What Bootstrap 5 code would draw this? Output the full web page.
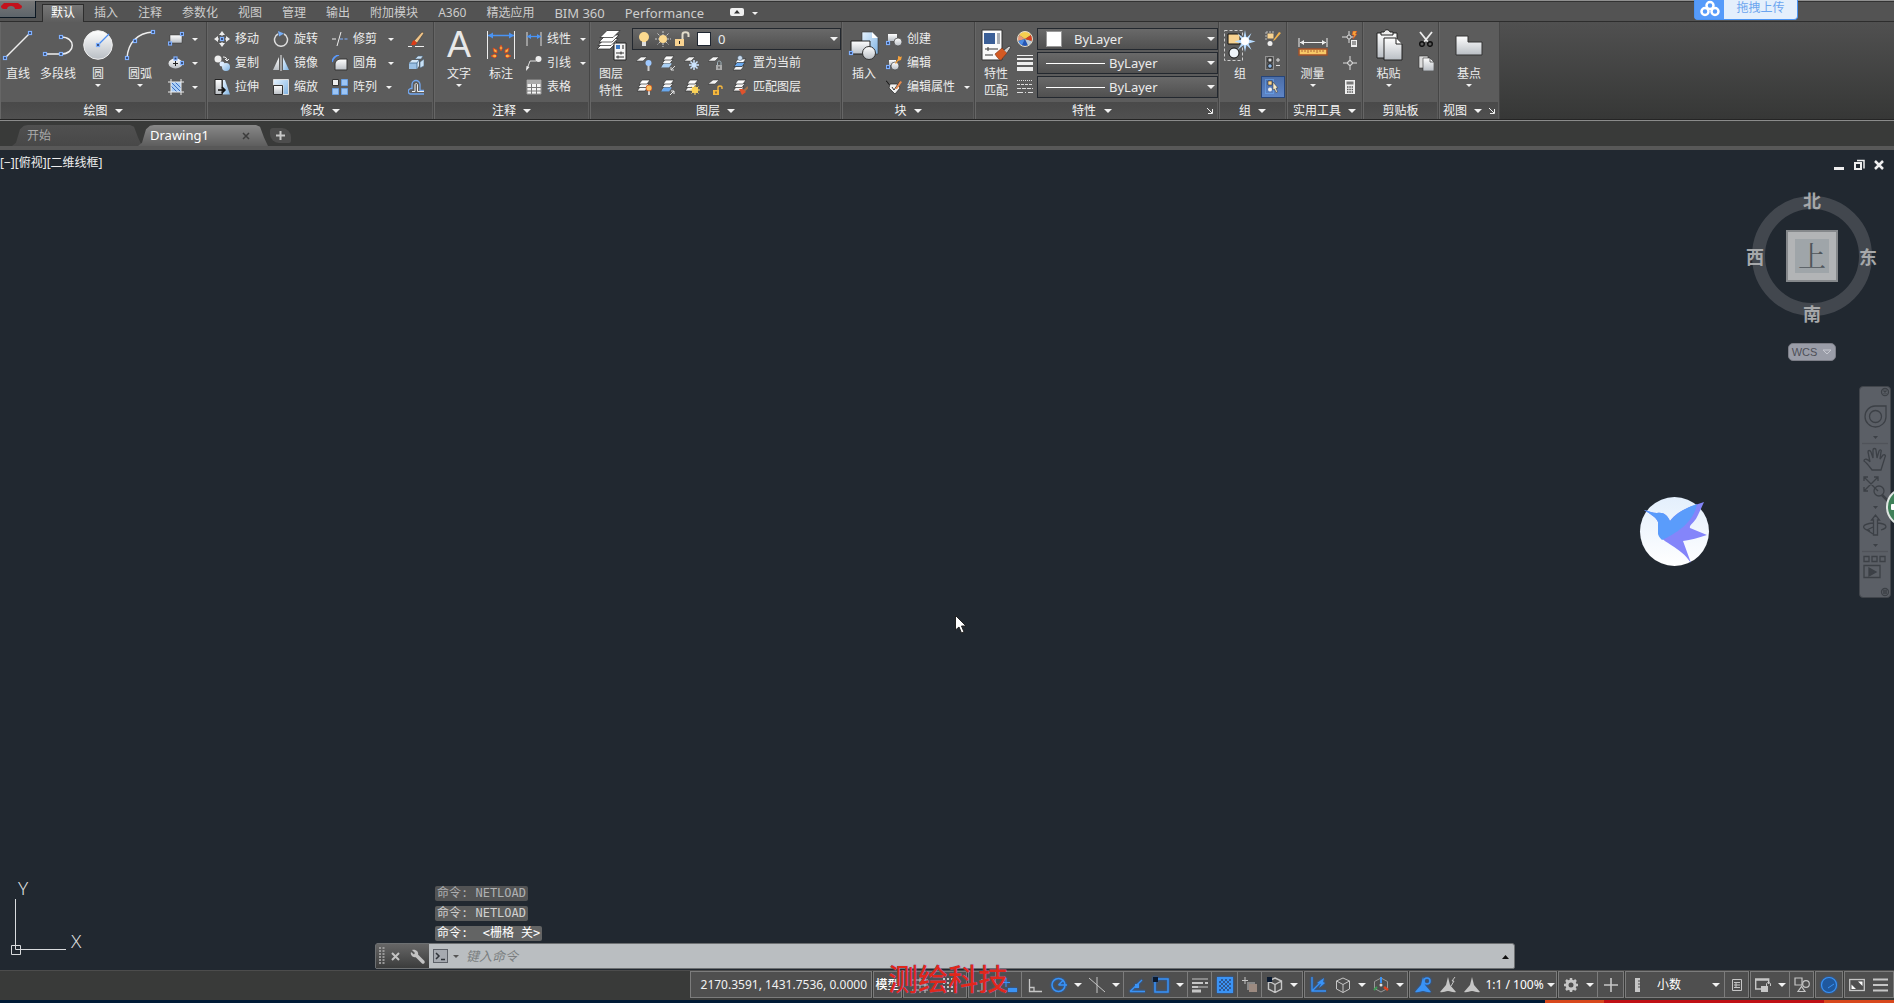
<!DOCTYPE html>
<html lang="zh-CN">
<head>
<meta charset="utf-8">
<meta name="viewport" content="width=device-width, initial-scale=1">
<title>Drawing1</title>
<link href="https://cdn.jsdelivr.net/npm/bootstrap@5.3.0/dist/css/bootstrap.min.css" rel="stylesheet">
<style>
body{font:12px/16px "Noto Sans","Noto Sans CJK SC",sans-serif;color:#ececec;background:#393a39;overflow:hidden}
button,select,input{font:inherit;color:inherit;background:none;border:0;padding:0;margin:0;border-radius:0}
select{appearance:none;outline:0}
select option{background:#555}
svg{display:block;flex:none;overflow:visible}
.ic{width:16px;height:16px}
.ic-lg{width:32px;height:32px}
.tri{flex:none;width:0;height:0;border:3px solid transparent;border-top-color:#f2f2f2;border-bottom:0}
.tri-lg{border-width:4px;border-bottom-width:0}
/* menu */
.menu-row{height:22px;background:#535353;border-top:1px solid #909090;border-bottom:1px solid #2d2d2d;box-shadow:inset 0 1px #333}
.app-btn{width:36px;height:17px;background:linear-gradient(#777,#5d646a);border:1px solid #0b1722;border-width:0 1px 1px 0;margin-right:6px}
.menu-tab{height:18px;padding:0 10px;color:#cdcdcd;text-decoration:none;line-height:18px;font-size:12px;margin-top:3px}
.menu-tab.on{background:linear-gradient(#777,#5d5d5d);color:#fff;border:1px solid #2d2d2d;border-bottom:0;padding:0 8px;height:18px;line-height:16px}
.latin{font-size:13px}
.upload{top:-1px;right:96px;height:20px;width:104px;background:#e4effc;border:1px solid #4a94f4;border-top:0;border-radius:0 0 4px 4px;color:#6ba5ef;z-index:5;line-height:14px}
.upload-logo{width:29px;height:19px;background:#569bfa}
/* ribbon */
.ribbon{height:97px;background:linear-gradient(#505050,#363736)}
.pane{background:#5c5c5c;border-right:1px solid #464646;box-shadow:inset 1px 0 #666}
.pane-body{height:80px;padding-top:5px}
.pane-title{height:17px;gap:7px;line-height:16px;color:#f4f4f4;background:linear-gradient(#494949,#505050);margin:0 1px}
.pane-title .launch{width:6px;height:6px}
.w-draw{width:207px}.w-mod{width:227px}.w-ann{width:156px}.w-lay{width:252px}.w-blk{width:133px}
.w-prop{width:244px}.w-grp{width:68px}.w-util{width:76px}.w-clip{width:76px}.w-view{width:61px}
.mod-cols{gap:14px;padding-left:7px}
.big{display:flex;flex-direction:column;align-items:center;width:44px;padding-top:2px;line-height:17px;height:74px}
.big svg{margin-bottom:4px}
.big .tri{margin-top:2px}
.big.s36{width:36px}.big.s42{width:42px}.big.s48{width:48px}.big.s52{width:51px}.big.s60{width:62px}
.tool{display:flex;align-items:center;gap:5px;height:24px;white-space:nowrap}
.tool .tri{margin-left:6px}
.tool.iconic{width:24px;justify-content:center}
.tool.pressed{height:22px;margin:1px 0;background:linear-gradient(#4a6ca6,#5f86c8);box-shadow:inset 0 0 0 1px #26457a}
.combo{display:flex;align-items:center;height:22px;margin:1px 0;background:linear-gradient(#696969,#505050);border:1px solid #23282f;padding-right:2px;font-size:13px}
.combo select{flex:1 1 0;min-width:0;height:20px;line-height:18px}
.combo.layer{gap:3px;padding-left:3px}
.swatch{width:14px;height:14px;background:#fff;border:1px solid #1d2530}
.swatch.plain{width:16px;height:16px;border-color:#999}
.dash{width:59px;height:1px;background:#fff}
/* file tabs */
.file-row{height:31px;border-top:1px solid #242424;border-bottom:4px solid #585858;box-shadow:inset 0 1px #8b8b8b;background:#393a39;padding:5px 0 0 12px}
.file-tab{height:21px;width:130px;padding:0 15px;color:#a9a9a9;background:linear-gradient(#505050,#484848);clip-path:polygon(0 100%,4px 85%,8px 20%,12px 4%,16px 0,calc(100% - 12px) 0,calc(100% - 8px) 8%,calc(100% - 4px) 60%,100% 100%);margin-right:-4px;line-height:21px}
.file-tab.on{background:linear-gradient(#888,#5e5e5e);color:#fff;font-size:13px;padding-right:18px;padding-left:12px}
.plus{width:21px;height:15px;background:#4d4d4d;border-radius:3px 9px 2px 9px;margin:3px 0 0 6px}
/* canvas */
.canvas{background:#212830}
.vp-label{top:5px;left:0;color:#eee}
.vp-btns{top:9px;right:9px;gap:8px}
.cube{top:36px;right:28px;width:128px;height:142px}
.wind{position:absolute;font:bold 18px/20px "Noto Sans CJK SC",sans-serif;color:#a6a8aa;width:20px;text-align:center}
.cube-face{left:48px;top:44px;width:52px;height:52px;background:#b2b4b6;border:2px solid #85888b;padding:7px}
.cube-face span{display:block;width:34px;height:34px;background:#9fa5a9;color:#50565b;font:28px/32px "Noto Serif CJK SC","Noto Sans CJK SC",serif;text-align:center}
.wcs{top:193px;right:58px;width:48px;height:18px;border:1px solid #7c7e87;border-radius:5px;background:#9a9da8;color:#4e5058;gap:5px;font:11px/14px "Liberation Sans",sans-serif}
.navbar-3d{top:236px;right:3px;width:32px;height:212px;background:#5b5f66;border:1px solid #41454b;border-radius:4px;color:#3c4046}
.bird{right:185px;top:347px;width:69px;height:69px}
.badge-go{right:0;top:338px}
.pointer{left:50.4%;top:465px}
.ucs{left:0;bottom:9px}
.log{left:435px;bottom:29px}
.chip{background:#525354;border-radius:2px;height:15px;line-height:15px;padding:0 2px;margin-bottom:5px;color:#aeb0b2;font-family:"DejaVu Sans Mono","Noto Sans CJK SC",monospace;white-space:pre}
.chip.mid{background:#5a5b5b;color:#cfcfcf}.chip.new{background:#636464;color:#fff;margin-bottom:0}
.cli{left:375px;right:379px;bottom:1px;height:26px;background:#babec1;border:1px solid #6d7072;border-radius:3px 3px 2px 2px}
.cli-grip{width:53px;height:24px;background:linear-gradient(#666,#3b3c3c);gap:6px;padding-left:3px}
.cli .tri{border-top-color:#555}
.cli input{flex:1;height:24px;color:#555;font:italic 13px "Noto Sans CJK SC",sans-serif;padding:0 0 2px 7px;outline:0}
.cli input::placeholder{color:#7b7e80;opacity:1}
/* status */
.status{height:30px;background:#393a39;border-top:1px solid #4c4c4c}
.sgrp{display:flex;height:27px;border:1px solid #7c7c7c;background:#4f4f4f;margin-right:1px}
.cell{display:flex;align-items:center;justify-content:center;gap:7px;height:25px;width:26px;color:#c6c6c6;white-space:nowrap}
.cell+.cell.bar{border-left:1px solid #7c7c7c}
.cell .tri{border-width:4px;border-bottom-width:0}
.blue{color:#3a93f5;filter:drop-shadow(0 0 1px #1263d4)}
.c38{width:38px}.c31{width:31px}.c24{width:24px}.c41{width:41px}.c70{width:72px;gap:3px}.c98{width:98px}
.coords{width:180px;justify-content:flex-end;padding-right:4px;color:#f2f2f2}
.model{width:27px;font-weight:500;color:#fff;overflow:hidden}
.mark-text{right:886px;bottom:8px;color:#e0281c;font:500 30px/36px "Noto Sans CJK SC",sans-serif;z-index:4;text-shadow:0 0 1px #5b86e0}
.edge-strip{height:3px;background:linear-gradient(90deg,#001a35 calc(100% - 349px),#d8481c 0,#d8481c calc(100% - 290px),#c01016 0,#c01016 calc(100% - 70px),#d8481c 0)}
</style>
<script src="https://cdn.jsdelivr.net/npm/bootstrap@5.3.0/dist/js/bootstrap.bundle.min.js"></script>
</head>
<body class="d-flex flex-column vh-100 position-relative">
<svg width="0" height="0" class="position-absolute" aria-hidden="true">
<defs>
<linearGradient id="gw" x2="0" y2="1"><stop stop-color="#fff"/><stop offset="1" stop-color="#b9bec4"/></linearGradient>
<linearGradient id="gb" x2="1" y2="1"><stop stop-color="#e6f3ff"/><stop offset="1" stop-color="#7eb2e2"/></linearGradient>
<linearGradient id="gbird" x2="0" y2="1"><stop stop-color="#e3effc"/><stop offset="1" stop-color="#fff"/></linearGradient>
<g id="nd"><rect x="-1.5" y="-1.5" width="3" height="3" fill="#2d3f66" stroke="#7fb0ff" stroke-width="1.2"/></g>
<g id="sheet"><path d="M5 0h6l-4 4H0z" fill="#f4f4f4" stroke="#333" stroke-width=".5"/></g>
<g id="stack"><path d="M4 8h8l-3 4H1z" fill="#f4f4f4" stroke="#333" stroke-width=".7"/><path d="M5 4.500h8l-3 4H2z" fill="#f4f4f4" stroke="#333" stroke-width=".7"/><path d="M6 1h8l-3 4H3z" fill="#fff" stroke="#333" stroke-width=".7"/></g>
</defs>
<symbol id="line" viewBox="0 0 32 32"><path d="M28 4 3 29" stroke="#eee" stroke-width="1.5"/><use href="#nd" x="28" y="4"/><use href="#nd" x="3" y="29"/></symbol>
<symbol id="pline" viewBox="0 0 32 32"><path d="M19 8c15 0 15 17 0 17H3" fill="none" stroke="#eee" stroke-width="1.5"/><use href="#nd" x="19" y="8"/><use href="#nd" x="3" y="25"/><use href="#nd" x="19" y="25"/></symbol>
<symbol id="circ" viewBox="0 0 32 32"><circle cx="16" cy="16" r="14.300" fill="url(#gw)" stroke="#eee"/><path d="m16 16 11-11" stroke="#4a8cf0" stroke-width="1.200"/><use href="#nd" x="16" y="16"/></symbol>
<symbol id="arc" viewBox="0 0 32 32"><path d="M3 29C4 14 13 4 29 3" fill="none" stroke="#eee" stroke-width="1.500"/><use href="#nd" x="29" y="3"/><use href="#nd" x="11" y="12"/><use href="#nd" x="3" y="29"/></symbol>
<symbol id="rect" viewBox="0 0 16 16"><path d="M2 4h12v8H2z" fill="url(#gw)" stroke="#333" stroke-width=".5"/><use href="#nd" x="14" y="3"/><use href="#nd" x="2" y="12.500"/></symbol>
<symbol id="ell" viewBox="0 0 16 16"><ellipse cx="7.500" cy="8.500" rx="7" ry="5" fill="url(#gw)"/><path d="M5 8.500h5M7.500 6v5" stroke="#222"/><use href="#nd" x="7.500" y="3.500"/><use href="#nd" x="14" y="8"/></symbol>
<symbol id="hatch" viewBox="0 0 16 16"><path d="M3 3h10v10H3z" fill="#a9cdf5"/><path d="m3 7 6 6M3 3l10 10M7 3l6 6" stroke="#3b6fc4"/><path d="M3 0v16M13 0v16M0 3h16M0 13h16" stroke="#eee"/></symbol>
<symbol id="move" viewBox="0 0 16 16"><path d="m8 0 3 4H5zM8 16l3-4H5zM0 8l4-3v6zM16 8l-4-3v6z" fill="#eee"/><path d="M8 3v2m0 6v2M3 8h2m6 0h2" stroke="#eee"/><use href="#nd" x="8" y="8"/></symbol>
<symbol id="rot" viewBox="0 0 16 16"><path d="M11 3a6.500 6.500 0 1 1-6 0" fill="none" stroke="#ddd" stroke-width="1.500"/><path d="m5 0 6 2.500-5 3z" fill="#76aef8"/></symbol>
<symbol id="trim" viewBox="0 0 16 16"><path d="M0 8h4M9 1 5 15" stroke="#eee"/><path d="M8 8h8" stroke="#7fb0ff" stroke-dasharray="3 1.500"/></symbol>
<symbol id="erase" viewBox="0 0 16 16"><path d="M0 15.500h4m3 0h9" stroke="#eee"/><path d="m6 10 8-9 2 1-7 10z" fill="#f1c488" stroke="#333" stroke-width=".5"/><path d="m6 9 3 3c-2 3-4 2-6 2 1-2 1-4 3-5z" fill="#dd3c17"/></symbol>
<symbol id="copy" viewBox="0 0 16 16"><circle cx="4" cy="4" r="3.500" fill="#eee"/><circle cx="8" cy="9" r="2.500" fill="#dcecff"/><circle cx="12" cy="12" r="4" fill="url(#gb)"/><path d="M9 2c3 0 4 1 4 4m-2-2 2 2 2-2" stroke="#eee" fill="none"/></symbol>
<symbol id="mirror" viewBox="0 0 16 16"><path d="M6 2v13H0z" fill="url(#gw)"/><path d="M10 2v13h6z" fill="url(#gb)"/><path d="M8 0v16" stroke="#eee"/></symbol>
<symbol id="fillet" viewBox="0 0 16 16"><path d="M3 15V9c0-3 3-5 6-5h6v11z" fill="url(#gw)" stroke="#333"/><path d="M0 7c1-4 3-6 7-7" stroke="#5b9bff" stroke-width="1.800" fill="none"/></symbol>
<symbol id="explode" viewBox="0 0 16 16"><path d="M1 8h8v6H1z" fill="#9bc1e5"/><path d="m1 8 3-3h7L9 8zM9 8l2-3v6l-2 3z" fill="#d5e8f8"/><path d="M1 8h8v6M9 8l2-3" stroke="#416a91" fill="none" stroke-width=".8"/><path d="m7 4 3-3h5l-2 3zM12 7l4-3v7l-4 2z" fill="#c9e1f6" stroke="#47617a" stroke-width=".6"/></symbol>
<symbol id="stretch" viewBox="0 0 16 16"><path d="M1 .5h7v15H1z" fill="url(#gw)" stroke="#222"/><path d="M9 1h2l5 14.500H9z" fill="url(#gb)"/><path d="M4 11h6M8 8l3 3-3 3" stroke="#111" stroke-width="1.500" fill="none"/></symbol>
<symbol id="scale" viewBox="0 0 16 16"><path d="M.5.5h15v15H10V6H.500z" fill="url(#gb)" stroke="#ddd"/><path d="M.5 6.500h9v9h-9z" fill="url(#gw)" stroke="#333"/></symbol>
<symbol id="array" viewBox="0 0 16 16"><path d="M.5.5h6v6h-6z" fill="#eee" stroke="#333"/><path d="M9.500.5h6v6h-6zM.5 9.500h6v6h-6zM9.500 9.500h6v6h-6z" fill="#9bc4f5" stroke="#6a9fe0"/></symbol>
<symbol id="offset" viewBox="0 0 16 16"><path d="M16 11.500h-4V5.500a4 4 0 0 0-8 0v4H2.500c-3 1-3 5 0 5.500H16" stroke="#72a7f0" fill="none" stroke-width="1.300"/><path d="M4 12.500h3V6c0-2 2.500-2 2.500 0v6.500H16" stroke="#eee" fill="none"/></symbol>
<symbol id="dim" viewBox="0 0 32 32"><path d="M2.500 2v28M29.500 2v28" stroke="#eee"/><path d="M3 6.500h26" stroke="#4a94f5" stroke-width="1.500"/><path d="m3 6.500 5-3v6zM29 6.500l-5-3v6z" fill="#4a94f5"/><g fill="#f8b548" stroke="#d9401b" stroke-width=".8"><path d="m6 27 4-2 2 2-2 2z"/><path d="m8 19 4 2v3l-3-1zM16 16l1.500 3L16 22l-1.500-3zM24 19l-4 2v3l3-1zM26 27l-4-2-2 2 2 2z"/></g></symbol>
<symbol id="lin" viewBox="0 0 16 16"><path d="M1 1v14M15 1v14" stroke="#ddd"/><path d="M1 5.500h14" stroke="#4a94f5" stroke-width="1.300"/><path d="m1 5.500 4-2.500v5zM15 5.500 11 3v5z" fill="#4a94f5"/></symbol>
<symbol id="leader" viewBox="0 0 16 16"><path d="M1 14 4 6h6" fill="none" stroke="#ddd"/><path d="m0 16 .5-5 3 1z" fill="#eee"/><circle cx="12.500" cy="4" r="3" fill="#eee"/></symbol>
<symbol id="table" viewBox="0 0 16 16"><path d="M1 1h14v14H1z" fill="#f4f4f4" stroke="#999"/><path d="M1 1h14v4H1z" fill="#aaa"/><path d="M1 8.500h14M1 12h14M5.500 5v10M10.500 5v10" stroke="#777"/></symbol>
<symbol id="layers" viewBox="0 0 32 32"><g fill="#fff" stroke="#222" stroke-width=".7"><path d="M9 13h13l-7 7H2z"/><path d="M10 9.500h13l-7 7H3z"/><path d="M11 6h13l-7 7H4z"/><path d="M12 1.500h13l-7 7H5z"/></g><path d="M19 14h12v17H19z" fill="#f5f5f5" stroke="#222"/><path d="M21 16h4v4h-4z" fill="#3e7ac4"/><path d="M27 16h2v4h-2z" fill="#888"/><path d="M21 24h8M21 28h8M26 22.500v3M23 26.500v3" stroke="#333"/></symbol>
<symbol id="bulb" viewBox="0 0 16 16"><circle cx="8" cy="6" r="5" fill="#fbd98f"/><path d="M6 10h4v5H6z" fill="#ddd"/><path d="M6 8h4v3H6z" fill="#fbd98f"/></symbol>
<symbol id="sun" viewBox="0 0 16 16"><path d="M8 0v16M0 8h16M2.500 2.500l11 11M13.500 2.500l-11 11" stroke="#ccc" stroke-dasharray="2 1"/><circle cx="8" cy="8" r="4" fill="#fbd98f"/></symbol>
<symbol id="unlock" viewBox="0 0 16 16"><path d="M1 8h9v7H1z" fill="#f8d391"/><path d="M8.500 8V3.500c0-3 6-3 6 0V6" stroke="#e2dccb" stroke-width="2" fill="none"/><path d="M5.500 10v3" stroke="#222"/></symbol>
<symbol id="l1" viewBox="0 0 16 16"><use href="#sheet" x="0" y="2"/><path d="M12.500 8v8" stroke="#ccc" stroke-width="2"/><circle cx="12.500" cy="8" r="3" fill="#9fc9ff"/></symbol>
<symbol id="l2" viewBox="0 0 16 16"><use href="#stack"/><path d="M4 8.500h8l-3 4H1z" fill="#a9d0f5"/><path d="m15 11-4 4m0-3v3h3" stroke="#ddd" fill="none"/></symbol>
<symbol id="l3" viewBox="0 0 16 16"><use href="#sheet" x="0" y="2"/><path d="M10 5v10M5 10h10M6.500 6.500l7 7M13.500 6.500l-7 7" stroke="#cde5ff" stroke-width="1.500"/></symbol>
<symbol id="l4" viewBox="0 0 16 16"><use href="#sheet" x="0" y="2"/><path d="M8 10h6v5H8z" fill="#aaa"/><path d="M9.500 10V7.500c0-2 3.500-2 3.500 0V10" fill="none" stroke="#a3b5bd"/><path d="M11 11.500v2" stroke="#333"/></symbol>
<symbol id="l5" viewBox="0 0 16 16"><use href="#stack" y="3"/><path d="M5 7.500h8l-3 4H2z" fill="#69a8ee" stroke="#333" stroke-width=".6"/><circle cx="8" cy="3" r="2.500" fill="#c9dcf0" stroke="#345" stroke-width=".5"/></symbol>
<symbol id="l6" viewBox="0 0 16 16"><use href="#stack"/><path d="M13 9v7" stroke="#ccc" stroke-width="2"/><circle cx="13" cy="9" r="3" fill="#f8c161" stroke="#df5016" stroke-width=".7"/></symbol>
<symbol id="l7" viewBox="0 0 16 16"><use href="#stack"/><path d="M4 8.500h8l-3 4H1z" fill="#69a8ee"/><path d="m10 16 4-4m-3 0h3v3" stroke="#eee" fill="none"/></symbol>
<symbol id="l8" viewBox="0 0 16 16"><use href="#stack"/><path d="M11 6v10M6 11h10M7.500 7.500l7 7M14.500 7.500l-7 7" stroke="#f7d56b"/><circle cx="11" cy="11" r="3.300" fill="#fbd255"/></symbol>
<symbol id="l9" viewBox="0 0 16 16"><use href="#sheet" x="0" y="1"/><path d="M5 11h6v5H5z" fill="#f6b73d"/><path d="M10 11V8.500c0-2 4-2 4 0v1.500" stroke="#f6b73d" fill="none" stroke-width="1.400"/><path d="M8 12.500v2" stroke="#333"/></symbol>
<symbol id="l10" viewBox="0 0 16 16"><use href="#stack"/><path d="m16 8-4 4" stroke="#a5744a" stroke-width="2"/><path d="m7 10 4 0 3 3-4 3z" fill="#e0522c"/></symbol>
<symbol id="insert" viewBox="0 0 32 32"><path d="M14 3h10l6 6v16H14z" fill="url(#gb)" stroke="#333" stroke-width=".6"/><path d="M24 3v6h6z" fill="#fff"/><path d="M3 12h19v13H3z" fill="url(#gw)" stroke="#222"/><circle cx="21" cy="24" r="6.500" fill="url(#gw)" stroke="#333"/><use href="#nd" x="3" y="24"/></symbol>
<symbol id="create" viewBox="0 0 16 16"><path d="M2 3h9v7H2z" fill="url(#gw)"/><circle cx="12" cy="11" r="4" fill="url(#gw)" stroke="#444" stroke-width=".7"/><use href="#nd" x="2" y="12"/></symbol>
<symbol id="bedit" viewBox="0 0 16 16"><path d="M3 5h7v5H3z" fill="url(#gw)"/><circle cx="9" cy="11" r="4" fill="url(#gw)" stroke="#444" stroke-width=".7"/><path d="m9 8 3-4V1l3 1 1-1-1 4-3 1-2 3z" fill="#f5a13b"/><use href="#nd" x="2" y="12"/></symbol>
<symbol id="attr" viewBox="0 0 16 16"><path d="M0 2c2 0 2 4 4 4" stroke="#111" fill="none"/><path d="M4 5h7l3 4-5 6-6-6z" fill="#f1f1f1" stroke="#222" stroke-width=".7"/><path d="m6 8 2 3 6-9" fill="none" stroke="#333"/><path d="m9 10 5-8 2 1-5 7z" fill="#e98a4e"/></symbol>
<symbol id="match" viewBox="0 0 32 32"><path d="M2 1h20v30H2z" fill="#fafafa" stroke="#333"/><path d="M4 4h11v11H4z" fill="#3b5f97"/><path d="M17 4h3v11h-3z" fill="#a9adb3"/><path d="M5 20h13M5 26h8M8 18v4" stroke="#333"/><path d="m15 25 7-6 5 5-6 7c-2 0-5-4-6-6z" fill="#d35a23" stroke="#7c2d0c" stroke-width=".6"/><path d="m24 21 5-4 2 1-4 6" fill="#ccc" stroke="#444"/></symbol>
<symbol id="wheel" viewBox="0 0 16 16"><path d="M8 8 2 4a7 7 0 0 1 12 0z" fill="#f6ce4e"/><path d="M8 8 2 4a7 7 0 0 0-1 6z" fill="#e79a78"/><path d="m8 8-7 2a7 7 0 0 0 4 4.500z" fill="#4c8ce5"/><path d="m8 8-3 6.500a7 7 0 0 0 6 0z" fill="#2256b8"/><path d="m8 8 3 6.500a7 7 0 0 0 4-4.500z" fill="#b8c9d8"/><path d="m8 8 7 2a7 7 0 0 0-1-6z" fill="#d5411e"/><circle cx="8" cy="8" r="7.500" fill="none" stroke="#e8dfcb"/></symbol>
<symbol id="lw" viewBox="0 0 16 16"><path d="M0 .500h16" stroke="#eee"/><path d="M0 4h16" stroke="#eee" stroke-width="2"/><path d="M0 8.500h16" stroke="#eee" stroke-width="3"/><path d="M0 14h16" stroke="#eee" stroke-width="4"/></symbol>
<symbol id="lt" viewBox="0 0 16 16"><path d="M0 1.500h16" stroke="#ddd" stroke-dasharray="1 1"/><path d="M0 5.500h16" stroke="#ddd" stroke-dasharray="3 1"/><path d="M0 9.500h16" stroke="#ddd" stroke-dasharray="4 1"/><path d="M0 13.500h16" stroke="#ddd" stroke-dasharray="6 2 1 2"/></symbol>
<symbol id="group" viewBox="0 0 32 32"><path d="M.5 1.500h18v30H.5z" stroke="#ccc" stroke-dasharray="3 2" fill="none"/><path d="M4 5h12v10H4z" fill="#f8d391" stroke="#111"/><circle cx="10" cy="24" r="5" fill="#eef3f8" stroke="#111"/><path d="m21 1 1.500 8 5-5-3 6.500 7 2-7 2 3 6.500-5-5L21 23l-1.500-7-6 5 4-6.500-7-2 7-2-4-6.500 6 5z" fill="#b8dcff"/><circle cx="21" cy="12" r="4" fill="#fff"/></symbol>
<symbol id="g2" viewBox="0 0 16 16"><path d="M1 1h9M1 1v9" stroke="#bbb" stroke-dasharray="2 1"/><path d="M2.500 2.500h6v5h-6z" fill="#f8d391"/><circle cx="5" cy="12.500" r="2.500" fill="#eee"/><path d="m16 2-6 7-2 1 1-2 5-7z" fill="#f0b24e"/></symbol>
<symbol id="g3" viewBox="0 0 16 16"><path d="M.5 1.500h8v13h-8z" stroke="#ccc" stroke-dasharray="1 1" fill="none"/><path d="M3 3h4v4H3z" fill="#ddd" stroke="#222"/><circle cx="5" cy="11" r="2.300" fill="#8fb9e8" stroke="#222"/><path d="M11 5h4M13 3v4M11 10.500h4" stroke="#ddd"/></symbol>
<symbol id="g4" viewBox="0 0 16 16"><path d="M.5.500h8v14h-8z" stroke="#6fb3ff" stroke-dasharray="1 1" fill="none"/><path d="M3 2h4v4H3z" fill="#f8d391" stroke="#111" stroke-width=".5"/><circle cx="5" cy="10.500" r="2" fill="#eee"/><path d="m8 3 5 6h-2l1.500 4-1.500.500L9.500 10 8 11z" fill="#f5e9c8" stroke="#333" stroke-width=".5"/></symbol>
<symbol id="meas" viewBox="0 0 32 32"><path d="M2 9v9M30 9v9" stroke="#eee"/><path d="M3 13.500h26" stroke="#eee"/><path d="m3 13.500 4-2.500v5zM29 13.500l-4-2.500v5z" fill="#eee"/><path d="M2 20h28v6H2z" fill="#f8c967" stroke="#a1502a" stroke-width="1.500"/><path d="M5 21v2m3-2v2m3-2v3m3-3v2m3-2v2m3-2v3m3-3v2m3-2v2" stroke="#a1502a" stroke-width=".8"/></symbol>
<symbol id="u1" viewBox="0 0 16 16"><path d="M0 6h5m4 0h3M7 0v4m0 4v4" stroke="#ddd"/><circle cx="7" cy="6" r="2" fill="none" stroke="#ddd"/><path d="m11 0 4 0-1.500 3H15l-4 5 1-4h-2z" fill="#f5a53b" stroke="#d4431b" stroke-width=".5"/><path d="M9 9h6v7H9z" fill="#eee"/><path d="M10 11h4m-4 2h4" stroke="#444"/></symbol>
<symbol id="u2" viewBox="0 0 16 16"><path d="M8 1v14M1 8h14" stroke="#ddd"/><circle cx="8" cy="8" r="2.300" fill="#666" stroke="#eee"/></symbol>
<symbol id="calc" viewBox="0 0 16 16"><path d="M3 1h10v14H3z" fill="#eee"/><path d="M4.500 2.500h7v3h-7z" fill="#777"/><path d="M5 8h6M5 10.500h6M5 13h6" stroke="#555" stroke-dasharray="1.500 .8" stroke-width="1.500"/></symbol>
<symbol id="paste" viewBox="0 0 32 32"><path d="M4 4h20v25H4z" fill="url(#gw)" stroke="#222"/><path d="M8 6V3h3c1-3 5-3 6 0h3v3z" fill="#eee" stroke="#222"/><path d="M11 9h12l6 6v16H11z" fill="url(#gw)" stroke="#222"/><path d="M23 9v6h6" fill="#fff" stroke="#222"/></symbol>
<symbol id="cut" viewBox="0 0 16 16"><path d="m2 1 8 10M14 1 6 11" stroke="#eee" stroke-width="1.800"/><circle cx="4" cy="13" r="2.300" fill="none" stroke="#111" stroke-width="1.500"/><circle cx="12" cy="13" r="2.300" fill="none" stroke="#111" stroke-width="1.500"/></symbol>
<symbol id="cpy" viewBox="0 0 16 16"><path d="M1 1h9v12H1z" fill="#ddd" stroke="#333" stroke-width=".6"/><path d="M5 3h7l4 4v9H5z" fill="url(#gw)" stroke="#333" stroke-width=".6"/><path d="M12 3v4h4" stroke="#333" fill="none" stroke-width=".7"/></symbol>
<symbol id="base" viewBox="0 0 32 32"><path d="M3 7h12v6h14v13H3z" fill="url(#gw)" stroke="#333"/></symbol>
<symbol id="man" viewBox="0 0 16 16"><path d="m8 0 2 8 6 7c-3 1-5-1-8-1s-5 2-8 1l6-7z" fill="currentColor"/></symbol>
<symbol id="scube" viewBox="0 0 16 16"><path d="m8 1 6.500 3v8L8 15.500 1.500 12V4zM1.500 4 8 7.500 14.500 4M8 7.500v8" fill="none" stroke="currentColor"/></symbol>
</svg>

<header class="menu-row d-flex align-items-start position-relative">
  <button class="app-btn p-0" aria-label="应用程序菜单"><svg width="34" height="12"><path d="M4 0h14l4 3c0 2-1 3-3 3h-4c0-2-2-3-4-3S7 4 7 6H4C2 6 1 5 1 3z" fill="#c4121c"/></svg></button>
  <nav class="d-flex">
    <a class="menu-tab on" href="#">默认</a><a class="menu-tab" href="#">插入</a><a class="menu-tab" href="#">注释</a><a class="menu-tab" href="#">参数化</a><a class="menu-tab" href="#">视图</a><a class="menu-tab" href="#">管理</a><a class="menu-tab" href="#">输出</a><a class="menu-tab" href="#">附加模块</a><a class="menu-tab" href="#">A360</a><a class="menu-tab" href="#">精选应用</a><a class="menu-tab latin" href="#">BIM 360</a><a class="menu-tab latin" href="#">Performance</a>
  </nav>
  <button class="d-flex align-items-center gap-1 ms-3 mt-1" aria-label="最小化功能区"><svg width="14" height="13"><rect y="3" width="14" height="8" rx="2" fill="#f0f0f0"/><path d="M4 8.500h6L7 5z" fill="#333"/></svg><i class="tri ms-1 mt-1"></i></button>
  <button class="upload position-absolute d-flex align-items-center p-0"><span class="upload-logo d-flex align-items-center justify-content-center"><svg width="20" height="16" fill="none" stroke="#fff" stroke-width="2.500"><circle cx="10" cy="3.500" r="3.500"/><circle cx="5" cy="9.500" r="3.500"/><circle cx="15" cy="9.500" r="3.500"/></svg></span><span class="flex-fill pb-1">拖拽上传</span></button>
</header>

<section class="ribbon d-flex">
  <div class="pane w-draw">
    <div class="pane-body d-flex">
      <button class="big s36"><svg class="ic-lg"><use href="#line"/></svg>直线</button>
      <button class="big"><svg class="ic-lg"><use href="#pline"/></svg>多段线</button>
      <button class="big s36"><svg class="ic-lg"><use href="#circ"/></svg>圆<i class="tri"></i></button>
      <button class="big s48"><svg class="ic-lg"><use href="#arc"/></svg>圆弧<i class="tri"></i></button>
      <div class="ps-1">
        <button class="tool gap-2" aria-label="矩形"><svg class="ic"><use href="#rect"/></svg><i class="tri ms-0"></i></button>
        <button class="tool gap-2" aria-label="椭圆"><svg class="ic"><use href="#ell"/></svg><i class="tri ms-0"></i></button>
        <button class="tool gap-2" aria-label="图案填充"><svg class="ic"><use href="#hatch"/></svg><i class="tri ms-0"></i></button>
      </div>
    </div>
    <div class="pane-title d-flex align-items-center justify-content-center">绘图<i class="tri tri-lg"></i></div>
  </div>

  <div class="pane w-mod">
    <div class="pane-body mod-cols d-flex">
      <div>
        <button class="tool"><svg class="ic"><use href="#move"/></svg>移动</button>
        <button class="tool"><svg class="ic"><use href="#copy"/></svg>复制</button>
        <button class="tool"><svg class="ic"><use href="#stretch"/></svg>拉伸</button>
      </div>
      <div>
        <button class="tool"><svg class="ic"><use href="#rot"/></svg>旋转</button>
        <button class="tool"><svg class="ic"><use href="#mirror"/></svg>镜像</button>
        <button class="tool"><svg class="ic"><use href="#scale"/></svg>缩放</button>
      </div>
      <div>
        <button class="tool"><svg class="ic"><use href="#trim"/></svg>修剪<i class="tri"></i></button>
        <button class="tool"><svg class="ic"><use href="#fillet"/></svg>圆角<i class="tri"></i></button>
        <button class="tool"><svg class="ic"><use href="#array"/></svg>阵列<i class="tri ms-1"></i></button>
      </div>
      <div>
        <button class="tool" aria-label="删除"><svg class="ic"><use href="#erase"/></svg></button>
        <button class="tool" aria-label="分解"><svg class="ic"><use href="#explode"/></svg></button>
        <button class="tool" aria-label="偏移"><svg class="ic"><use href="#offset"/></svg></button>
      </div>
    </div>
    <div class="pane-title d-flex align-items-center justify-content-center">修改<i class="tri tri-lg"></i></div>
  </div>

  <div class="pane w-ann">
    <div class="pane-body d-flex ps-1">
      <button class="big s42"><svg class="ic-lg" viewBox="0 0 32 32"><text x="16" y="28" text-anchor="middle" font-family="Liberation Sans" font-size="36" fill="#e8e8e8">A</text></svg>文字<i class="tri"></i></button>
      <button class="big s42"><svg class="ic-lg"><use href="#dim"/></svg>标注</button>
      <div class="ps-1">
        <button class="tool"><svg class="ic"><use href="#lin"/></svg>线性<i class="tri ms-1"></i></button>
        <button class="tool"><svg class="ic"><use href="#leader"/></svg>引线<i class="tri ms-1"></i></button>
        <button class="tool"><svg class="ic"><use href="#table"/></svg>表格</button>
      </div>
    </div>
    <div class="pane-title d-flex align-items-center justify-content-center">注释<i class="tri tri-lg"></i></div>
  </div>

  <div class="pane w-lay">
    <div class="pane-body d-flex">
      <button class="big s42 flex-shrink-0"><svg class="ic-lg"><use href="#layers"/></svg>图层<br>特性</button>
      <div class="flex-fill">
        <div class="combo layer"><svg class="ic"><use href="#bulb"/></svg><svg class="ic"><use href="#sun"/></svg><svg class="ic"><use href="#unlock"/></svg><span class="swatch ms-1"></span><select class="ms-1" aria-label="图层"><option>0</option></select><i class="tri tri-lg"></i></div>
        <div class="d-flex">
          <button class="tool iconic" aria-label="关闭图层"><svg class="ic"><use href="#l1"/></svg></button><button class="tool iconic" aria-label="隔离"><svg class="ic"><use href="#l2"/></svg></button><button class="tool iconic" aria-label="冻结"><svg class="ic"><use href="#l3"/></svg></button><button class="tool iconic" aria-label="锁定"><svg class="ic"><use href="#l4"/></svg></button><button class="tool ps-1"><svg class="ic"><use href="#l5"/></svg>置为当前</button>
        </div>
        <div class="d-flex">
          <button class="tool iconic" aria-label="打开所有图层"><svg class="ic"><use href="#l6"/></svg></button><button class="tool iconic" aria-label="取消隔离"><svg class="ic"><use href="#l7"/></svg></button><button class="tool iconic" aria-label="解冻"><svg class="ic"><use href="#l8"/></svg></button><button class="tool iconic" aria-label="解锁"><svg class="ic"><use href="#l9"/></svg></button><button class="tool ps-1"><svg class="ic"><use href="#l10"/></svg>匹配图层</button>
        </div>
      </div>
    </div>
    <div class="pane-title d-flex align-items-center justify-content-center">图层<i class="tri tri-lg"></i></div>
  </div>

  <div class="pane w-blk">
    <div class="pane-body d-flex">
      <button class="big"><svg class="ic-lg"><use href="#insert"/></svg>插入</button>
      <div>
        <button class="tool"><svg class="ic"><use href="#create"/></svg>创建</button>
        <button class="tool"><svg class="ic"><use href="#bedit"/></svg>编辑</button>
        <button class="tool"><svg class="ic"><use href="#attr"/></svg>编辑属性<i class="tri ms-1"></i></button>
      </div>
    </div>
    <div class="pane-title d-flex align-items-center justify-content-center">块<i class="tri tri-lg"></i></div>
  </div>

  <div class="pane w-prop">
    <div class="pane-body d-flex">
      <button class="big s42 flex-shrink-0"><svg class="ic-lg"><use href="#match"/></svg>特性<br>匹配</button>
      <div class="flex-fill">
        <div class="d-flex gap-1"><svg class="ic align-self-center"><use href="#wheel"/></svg><div class="combo flex-fill"><span class="swatch plain ms-2 me-2"></span><select class="ms-1" aria-label="颜色"><option>ByLayer</option></select><i class="tri tri-lg"></i></div></div>
        <div class="d-flex gap-1"><svg class="ic align-self-center"><use href="#lw"/></svg><div class="combo flex-fill ps-2"><span class="dash"></span><select class="ps-1" aria-label="线宽"><option>ByLayer</option></select><i class="tri tri-lg"></i></div></div>
        <div class="d-flex gap-1"><svg class="ic align-self-center"><use href="#lt"/></svg><div class="combo flex-fill ps-2"><span class="dash"></span><select class="ps-1" aria-label="线型"><option>ByLayer</option></select><i class="tri tri-lg"></i></div></div>
      </div>
    </div>
    <div class="pane-title d-flex align-items-center"><span class="flex-fill ps-2 text-center">特性<i class="tri tri-lg d-inline-block align-middle ms-2"></i></span><svg class="launch me-1" viewBox="0 0 6 6"><path d="m0 0 5 5M5.500 1v4.500H1" stroke="#eee" fill="none"/></svg></div>
  </div>

  <div class="pane w-grp">
    <div class="pane-body d-flex">
      <button class="big s42 flex-shrink-0"><svg class="ic-lg"><use href="#group"/></svg>组</button>
      <div>
        <button class="tool iconic" aria-label="解除编组"><svg class="ic"><use href="#g2"/></svg></button>
        <button class="tool iconic" aria-label="组编辑"><svg class="ic"><use href="#g3"/></svg></button>
        <button class="tool iconic pressed" aria-label="启用组选择"><svg class="ic"><use href="#g4"/></svg></button>
      </div>
    </div>
    <div class="pane-title d-flex align-items-center justify-content-center">组<i class="tri tri-lg"></i></div>
  </div>

  <div class="pane w-util">
    <div class="pane-body d-flex">
      <button class="big s52 flex-shrink-0"><svg class="ic-lg"><use href="#meas"/></svg>测量<i class="tri"></i></button>
      <div>
        <button class="tool iconic" aria-label="快速选择"><svg class="ic"><use href="#u1"/></svg></button>
        <button class="tool iconic" aria-label="点坐标"><svg class="ic"><use href="#u2"/></svg></button>
        <button class="tool iconic" aria-label="计算器"><svg class="ic"><use href="#calc"/></svg></button>
      </div>
    </div>
    <div class="pane-title d-flex align-items-center justify-content-center">实用工具<i class="tri tri-lg"></i></div>
  </div>

  <div class="pane w-clip">
    <div class="pane-body d-flex">
      <button class="big s52 flex-shrink-0"><svg class="ic-lg"><use href="#paste"/></svg>粘贴<i class="tri"></i></button>
      <div>
        <button class="tool iconic" aria-label="剪切"><svg class="ic"><use href="#cut"/></svg></button>
        <button class="tool iconic" aria-label="复制"><svg class="ic"><use href="#cpy"/></svg></button>
      </div>
    </div>
    <div class="pane-title d-flex align-items-center justify-content-center">剪贴板</div>
  </div>

  <div class="pane w-view">
    <div class="pane-body d-flex">
      <button class="big s60"><svg class="ic-lg"><use href="#base"/></svg>基点<i class="tri"></i></button>
    </div>
    <div class="pane-title d-flex align-items-center justify-content-center">视图<i class="tri tri-lg"></i><svg class="launch" viewBox="0 0 6 6"><path d="m0 0 5 5M5.500 1v4.500H1" stroke="#eee" fill="none"/></svg></div>
  </div>
</section>

<nav class="file-row d-flex">
  <a class="file-tab text-decoration-none" href="#">开始</a>
  <a class="file-tab on text-decoration-none d-flex justify-content-between align-items-center" href="#">Drawing1<svg width="8" height="8"><path d="m1 1 6 6M7 1 1 7" stroke="#3c3c3c" stroke-width="1.500"/></svg></a>
  <button class="plus d-flex align-items-center justify-content-center" aria-label="新图形"><svg width="9" height="9"><path d="M4.500 0v9M0 4.500h9" stroke="#c8c8c8" stroke-width="2"/></svg></button>
</nav>

<main class="canvas flex-fill position-relative overflow-hidden">
  <div class="vp-label position-absolute">[−][俯视][二维线框]</div>
  <div class="vp-btns position-absolute d-flex">
    <button aria-label="最小化"><svg width="12" height="13"><rect x="1" y="8" width="10" height="3" fill="#eee"/></svg></button>
    <button aria-label="还原"><svg width="12" height="13" fill="none" stroke="#eee"><path d="M4 1.500h7v8" stroke-width="1.500"/><rect x="2" y="4" width="6" height="6" stroke-width="2"/></svg></button>
    <button aria-label="关闭"><svg width="12" height="13"><path d="m2 2 8 8M10 2l-8 8" stroke="#eee" stroke-width="2.500"/></svg></button>
  </div>

  <div class="cube position-absolute">
    <svg class="position-absolute" width="128" height="142"><circle cx="74" cy="70" r="53.500" fill="none" stroke="#42474e" stroke-width="13"/></svg>
    <span class="wind" style="left:64px;top:4px">北</span><span class="wind" style="left:7px;top:60px">西</span><span class="wind" style="left:120px;top:60px">东</span><span class="wind" style="left:64px;top:117px">南</span>
    <div class="cube-face position-absolute"><span>上</span></div>
  </div>
  <button class="wcs position-absolute d-flex align-items-center justify-content-center">WCS<svg width="10" height="6"><path d="M1 1h8L5 5z" fill="none" stroke="#c6c8d0"/></svg></button>

  <div class="navbar-3d position-absolute">
    <svg width="30" height="210" fill="none" stroke="currentColor" stroke-width="1.300">
      <circle cx="25" cy="5" r="3.500"/><path d="m23.500 3.500 3 3m0-3-3 3"/>
      <path d="M26 19v11a10.500 10.500 0 1 1-11-11z"/><circle cx="15.500" cy="29.500" r="6"/>
      <path d="M13 49h5l-2.500 3z" fill="currentColor" stroke="none"/><path d="M2 56.500h26" stroke-opacity=".35"/>
      <path d="M12 83c-3-4-5-7-8-9 0-3 4-2 6 1L8 65c0-2 2-2 3 0l2 6v-8c0-2 3-2 3 0l1 8 2-7c1-2 3-1 2 1l-1 7 3-4c2-1 3 1 2 2l-4 13z"/>
      <path d="m4 90 14 14M18 90 4 104M4 94v-4h4M14 90h4v4M4 100v4h4"/><circle cx="19" cy="104" r="5"/><path d="m22 108 6 6" stroke-width="2.500"/>
      <path d="M13 119h5l-2.500 3z" fill="currentColor" stroke="none"/>
      <path d="M13.500 148v-15h-2l4-5 4 5h-2v15zM13 136c-12 1-12 6-3 8M18 136c10 1 10 5 3 7M13 140l-6 3 6 4"/>
      <path d="M13 157h5l-2.500 3z" fill="currentColor" stroke="none"/><path d="M2 164.500h26" stroke-opacity=".35"/>
      <path d="M4 169.500h5v5H4zM12 169.500h5v5h-5zM20 169.500h5v5h-5zM4 178.500h16v12H4z"/><path d="m9 181 7 4-7 4z" fill="currentColor"/>
      <circle cx="25" cy="205" r="3.500"/><path d="M23 204h4m-4 2h4"/>
    </svg>
  </div>
  <svg class="badge-go position-absolute" width="8" height="40"><circle cx="20" cy="19" r="19" fill="#3f8159" stroke="#dfe5e2" stroke-width="2"/><rect x="5" y="16" width="6" height="6" rx="1" fill="#fff"/></svg>

  <svg class="bird position-absolute" viewBox="0 0 69 69"><circle cx="34.500" cy="34.500" r="34.500" fill="url(#gbird)"/><path d="M4 13c5 1 9 3 13 3 7-1 10 2 13 8C38 13 52 9 64 5c-3 7-5 11-7 15-3 6-8 8-7 11l17 7c-9 3-16 5-24 6l8 22C40 49 23 47 18 36V25c-2-5-8-8-14-12z" fill="#8485fa"/><path d="M4 13c5 1 9 3 13 3 7-1 10 2 13 8 8-10 19-14 27-17-3 18-20 29-35 36-3-3-4-5-4-7V25c-2-5-8-8-14-12z" fill="#5a9cfb"/></svg>

  <svg class="pointer position-absolute" width="12" height="19"><path d="M.5.500v14.500l3.500-3 2.500 6 2.500-1-2.500-6H11z" fill="#fff" stroke="#222"/></svg>

  <svg class="ucs position-absolute" width="90" height="80" stroke="#d9dbdd" fill="none"><path d="M15.500 18v50.500H66M11.500 64.500h9v9h-9z"/><g font-family="Noto Sans" font-size="19" font-weight="300" fill="#d9dbdd" stroke="none"><text x="18" y="14">Y</text><text x="71" y="67">X</text></g></svg>

  <div class="log position-absolute d-flex flex-column align-items-start">
    <div class="chip">命令: NETLOAD</div><div class="chip mid">命令: NETLOAD</div><div class="chip new">命令:  &lt;栅格 关&gt;</div>
  </div>
  <div class="cli position-absolute d-flex align-items-center">
    <div class="cli-grip d-flex align-items-center">
      <svg width="6" height="18"><path d="M1 0v18M4.500 0v18" stroke="#999" stroke-width="2" stroke-dasharray="2 1"/></svg>
      <svg width="9" height="9"><path d="m1 1 7 7M8 1 1 8" stroke="#c3c3c3" stroke-width="2"/></svg>
      <svg class="ms-1" width="15" height="15"><path d="m6 6 7 7" stroke="#c3c3c3" stroke-width="3.500" stroke-linecap="round"/><path d="M2 1 5 4 4 5.500 1 3c-1 3 2 6 5 5l2-2c1-3-2-6-6-5z" fill="#c3c3c3"/></svg>
    </div>
    <svg class="ms-1" width="16" height="15"><rect x=".5" y=".5" width="14" height="13" fill="#a6aab0" stroke="#5d6168"/><path d="m3 4 3 3-3 3M8 10.500h4" stroke="#2f3338" fill="none" stroke-width="1.500"/></svg>
    <i class="tri ms-1"></i>
    <input type="text" placeholder="键入命令" aria-label="命令行">
    <svg class="me-1" width="8" height="5"><path d="M0 5h7L3.500 1z" fill="#111"/></svg>
  </div>
</main>

<footer class="status d-flex justify-content-end">
  <div class="sgrp"><div class="cell coords">2170.3591, 1431.7536, 0.0000</div></div>
  <div class="sgrp"><button class="cell model">模型</button></div>
  <div class="sgrp">
    <button class="cell c31" aria-label="栅格"><svg class="ic"><path d="M3 0v16M8 0v16M13 0v16M0 3h16M0 8h16M0 13h16" stroke="currentColor"/></svg></button>
    <button class="cell c31" aria-label="捕捉"><svg class="ic"><path d="M0 2h16M0 6h16M0 10h16M0 14h16" stroke="currentColor" stroke-width="2" stroke-dasharray="2 2"/></svg></button>
  </div>
  <div class="sgrp">
    <button class="cell" aria-label="推断约束"><svg class="ic"><path d="M3 14h10M8 2v12" stroke="currentColor"/></svg></button>
    <button class="cell bar" aria-label="动态输入"><svg class="ic blue"><path d="M5 1v9M1 5.500h8" stroke="currentColor"/><rect x="7" y="11" width="9" height="4" fill="currentColor"/></svg></button>
    <button class="cell bar" aria-label="正交"><svg class="ic"><path d="M2.500 2v12.500H15M3 10.500h4V14" stroke="currentColor" fill="none" stroke-width="1.300"/></svg></button>
    <button class="cell c38" aria-label="极轴追踪"><svg class="ic blue" fill="none" stroke="currentColor" stroke-width="1.500"><circle cx="7.500" cy="8" r="6.500"/><path d="M7.500 8H16M7.500 8l5-5"/></svg><i class="tri"></i></button>
    <button class="cell c38" aria-label="等轴测草图"><svg class="ic"><path d="m0 1 16 14M8 0v16" stroke="currentColor"/></svg><i class="tri"></i></button>
    <button class="cell bar" aria-label="对象捕捉追踪"><svg class="ic blue"><path d="M1 14.500h15M1 14.500 13 3" stroke="currentColor" stroke-width="1.300"/><rect x="6" y="7" width="4" height="4" fill="currentColor"/></svg></button>
    <button class="cell c38" aria-label="对象捕捉"><svg class="ic blue"><rect x="2" y="2" width="13" height="13" fill="none" stroke="currentColor" stroke-width="1.500"/><rect width="5" height="5" fill="#0a1a30"/></svg><i class="tri"></i></button>
    <button class="cell bar c24" aria-label="线宽"><svg class="ic"><path d="M0 2h16" stroke="currentColor"/><path d="M0 6h11m2 0h3M0 10h6" stroke="currentColor" stroke-width="2"/><path d="M0 14h9" stroke="currentColor" stroke-width="3"/><path d="M6 10h10" stroke="currentColor"/></svg></button>
    <button class="cell bar" aria-label="透明度"><svg class="ic blue"><rect x="1" y="1" width="14" height="14" fill="none" stroke="currentColor" stroke-width="2"/><path d="M2 3h12M2 7h12M2 11h12M4 5h10M4 9h10M4 13h10" stroke="currentColor" stroke-width="2" stroke-dasharray="2 2"/></svg></button>
    <button class="cell bar c24" aria-label="选择循环"><svg class="ic"><path d="M0 3.500h6M3 0v7" stroke="currentColor"/><rect x="5" y="5" width="8" height="8" fill="#888"/><rect x="7" y="7" width="8" height="8" fill="#9c8a80"/></svg></button>
    <button class="cell bar c41" aria-label="三维对象捕捉"><svg class="ic" stroke-width="1.400"><use href="#scube"/><rect width="5" height="5" fill="#0a1a30"/></svg><i class="tri"></i></button>
  </div>
  <div class="sgrp">
    <button class="cell" aria-label="动态 UCS"><svg class="ic blue"><path d="M2 0v14h14M2 14 10 6" stroke="currentColor" stroke-width="1.300" fill="none"/><path d="m7 6 7-5-1 4 2 1-6 5 2-4z" fill="currentColor"/></svg></button>
    <button class="cell c38" aria-label="选择过滤"><svg class="ic"><use href="#scube"/></svg><i class="tri"></i></button>
    <button class="cell c38" aria-label="小控件"><svg class="ic"><path d="m8 1 6.500 3.500v7L8 15l-6.500-3.500v-7z" fill="none" stroke="#999"/><path d="M8 0v6" stroke="#3a93f5" stroke-width="2"/><circle cx="8" cy="8" r="1.500" fill="#ddd"/><path d="m11 10 4 3" stroke="#e0401c" stroke-width="2.500"/><path d="m1 13 3-3" stroke="#3e9a55" stroke-width="2"/></svg><i class="tri"></i></button>
  </div>
  <div class="sgrp">
    <button class="cell" aria-label="注释可见性"><svg class="ic blue"><use href="#man"/><circle cx="12" cy="4" r="3" fill="none" stroke="currentColor" stroke-width="1.500"/></svg></button>
    <button class="cell c24" aria-label="自动缩放"><svg class="ic"><use href="#man"/><path d="m15 0-3 4h2l-3 5" stroke="currentColor" fill="none"/></svg></button>
    <button class="cell c24" aria-label="注释比例"><svg class="ic"><use href="#man"/></svg></button>
    <button class="cell c70 text-white">1:1 / 100%<i class="tri"></i></button>
  </div>
  <div class="sgrp">
    <button class="cell c38" aria-label="工作空间"><svg class="ic"><circle cx="8" cy="8" r="4" fill="none" stroke="currentColor" stroke-width="3"/><path d="M8 1v3m0 8v3M1 8h3m8 0h3M3 3l2 2m6 6 2 2M13 3l-2 2M5 11l-2 2" stroke="currentColor" stroke-width="2.500"/></svg><i class="tri"></i></button>
    <button class="cell bar" aria-label="注释监视器"><svg class="ic"><path d="M8 1v14M1 8h14" stroke="currentColor" stroke-width="1.600"/></svg></button>
  </div>
  <div class="sgrp">
    <label class="cell c98 ps-2 pe-1"><svg width="8" height="16"><path d="M1 1h5v14H1z" fill="currentColor"/><path d="M4 4h3M4 7h3M4 10h3" stroke="#4f4f4f"/></svg><select class="flex-fill text-white ms-2" aria-label="单位"><option>小数</option></select><i class="tri"></i></label>
    <button class="cell bar c24" aria-label="快捷特性"><svg width="10" height="12"><path d="M.5.500h9v11h-9zM2 3.500h6M2 6h6M2 8.500h6M4 3v6" fill="none" stroke="currentColor"/></svg></button>
  </div>
  <div class="sgrp">
    <button class="cell c38" aria-label="锁定用户界面"><svg class="ic"><path d="M6 12H.7V2h13v5M1 3h12" fill="none" stroke="currentColor" stroke-width="1.400"/><rect x="6" y="9" width="7" height="6" fill="currentColor"/><path d="M11.500 9V7c0-2 4-2 4 0v2" fill="none" stroke="currentColor"/></svg><i class="tri"></i></button>
    <button class="cell bar c24" aria-label="隔离对象"><svg class="ic" fill="none" stroke="currentColor" stroke-width="1.200"><path d="M1 1h7v7H1zM4 14.500h7l-3.500-5z"/><circle cx="12" cy="7" r="3.300"/></svg></button>
  </div>
  <div class="sgrp"><button class="cell" aria-label="硬件加速"><svg class="ic blue"><circle cx="8" cy="8" r="7.500" fill="#1f589e" stroke="currentColor" stroke-width="1.200"/><path d="m7 11 6-4" stroke="currentColor"/></svg></button></div>
  <div class="sgrp me-0">
    <button class="cell c24" aria-label="全屏显示"><svg class="ic"><rect x=".7" y="2.500" width="14.600" height="11" fill="none" stroke="currentColor" stroke-width="1.300"/><path d="M9 4.500h4.500V9zM2.500 12V7.500L7 12z" fill="#fff"/></svg></button>
    <button class="cell c24" aria-label="自定义"><svg class="ic"><path d="M0 2.500h15M0 8h15M0 13.500h15" stroke="currentColor" stroke-width="2"/></svg></button>
  </div>
</footer>
<div class="edge-strip"></div>
<div class="mark-text position-absolute">测绘科技</div>
</body>
</html>
